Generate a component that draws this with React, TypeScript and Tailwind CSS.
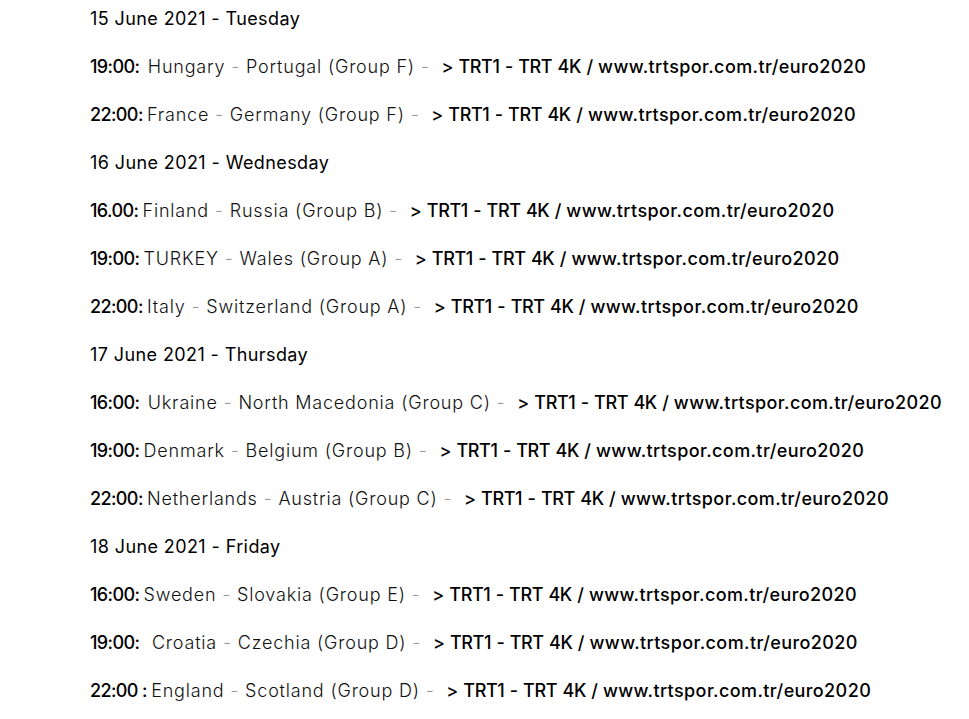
type Match = {
  time: string;
  home: string;
  away: string;
  group: string;
};

type Day = {
  date: string;
  matches: Match[];
};

const DAYS: Day[] = [
  {
    date: "15 June 2021 - Tuesday",
    matches: [
      { time: "19:00:  ", home: "Hungary", away: "Portugal", group: "(Group F)" },
      { time: "22:00: ", home: "France", away: "Germany", group: "(Group F)" },
    ],
  },
  {
    date: "16 June 2021 - Wednesday",
    matches: [
      { time: "16.00: ", home: "Finland", away: "Russia", group: "(Group B)" },
      { time: "19:00: ", home: "TURKEY", away: "Wales", group: "(Group A)" },
      { time: "22:00: ", home: "Italy", away: "Switzerland", group: "(Group A)" },
    ],
  },
  {
    date: "17 June 2021 - Thursday",
    matches: [
      { time: "16:00:  ", home: "Ukraine", away: "North Macedonia", group: "(Group C)" },
      { time: "19:00: ", home: "Denmark", away: "Belgium", group: "(Group B)" },
      { time: "22:00: ", home: "Netherlands", away: "Austria", group: "(Group C)" },
    ],
  },
  {
    date: "18 June 2021 - Friday",
    matches: [
      { time: "16:00: ", home: "Sweden", away: "Slovakia", group: "(Group E)" },
      { time: "19:00:   ", home: "Croatia", away: "Czechia", group: "(Group D)" },
      { time: "22:00 : ", home: "England", away: "Scotland", group: "(Group D)" },
    ],
  },
];

function MatchRow({ match }: { match: Match }) {
  return (
    <p className="whitespace-pre leading-[38px] mb-[10px]">
      <span className="font-medium text-black tracking-[-0.6px]">{match.time}</span>
      <span className="font-light tracking-[0.8px]">
        <span className="text-[#111]">{match.home}</span>
        <span className="text-[#999]"> - </span>
        <span className="text-[#111]">
          {match.away} {match.group}
        </span>
        <span className="text-[#999]"> -  </span>
      </span>
      <span className="font-medium text-black tracking-[-0.4px] [word-spacing:1px]">{"> TRT1 - TRT 4K / "}</span>
      <span className="font-medium text-black tracking-[0.4px]">www.trtspor.com.tr/euro2020</span>
    </p>
  );
}

export default function App() {
  return (
    <div className="min-h-screen bg-white pl-[90px] text-[18px] text-black font-['Inter',sans-serif]">
      {DAYS.map((day) => (
        <div key={day.date}>
          <p className="leading-[38px] mb-[10px] tracking-[0.4px] text-black">{day.date}</p>
          {day.matches.map((m) => (
            <MatchRow key={m.time + m.home} match={m} />
          ))}
        </div>
      ))}
    </div>
  );
}
